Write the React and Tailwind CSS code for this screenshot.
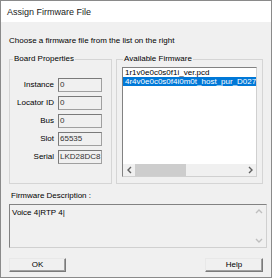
import React from "react";

const font = "font-['Liberation_Sans',Arial,sans-serif]";

const props = [
  { label: "Instance", value: "0" },
  { label: "Locator ID", value: "0" },
  { label: "Bus", value: "0" },
  { label: "Slot", value: "65535" },
  { label: "Serial", value: "LKD28DC8" },
];

const firmware = [
  "1r1v0e0c0s0f1i_ver.pcd",
  "4r4v0e0c0s0f4i0m0t_host_pur_D027",
];

const Arrow = ({ dir }) => {
  const paths = {
    left: "M4 1 L1 4 L4 7",
    right: "M1 1 L4 4 L1 7",
    up: "M1 4 L4 1 L7 4",
    down: "M1 1 L4 4 L7 1",
  };
  const wide = dir === "up" || dir === "down";
  return (
    <svg width={wide ? 8 : 5} height={wide ? 5 : 8} viewBox={wide ? "0 0 8 5" : "0 0 5 8"}>
      <path d={paths[dir]} fill="none" stroke={wide ? "#bfbfbf" : "#606060"} strokeWidth="1.4" />
    </svg>
  );
};

export default function App() {
  return (
    <div className={`w-[273px] h-[279px] bg-white ${font} text-[8px] leading-[10px] text-black`}>
      <div className="w-[272px] h-[278px] border border-[#8a8a8a] flex flex-col bg-[#f0f0f0]">
        {/* title bar */}
        <div className="h-[21px] bg-white flex items-center pl-[6px] text-[9px] text-[#1a1a1a]">
          Assign Firmware File
        </div>

        <div className="flex flex-col px-[8px]">
          <div className="mt-[14px] h-[10px] whitespace-nowrap">Choose a firmware file from the list on the right</div>

          <div className="flex gap-[4px] mt-[8px] h-[130px]">
            <fieldset className="w-[105px] h-[130px] border border-[#d5d5d5] px-[2px]">
              <legend className="ml-[1px] px-[1px] h-[10px]">Board Properties</legend>
              <div className="flex flex-col gap-[4px] mt-[14px]">
                {props.map((p) => (
                  <div key={p.label} className="flex items-center h-[14px]">
                    <div className="w-[42px] text-right whitespace-nowrap">{p.label}</div>
                    <div className="ml-[4px] w-[44px] h-[14px] border border-[#a0a0a0] border-t-[#7a7a7a] border-l-[#7a7a7a] bg-[#f0f0f0] pl-[1px] leading-[12px] overflow-hidden whitespace-nowrap text-[#333]">
                      {p.value}
                    </div>
                  </div>
                ))}
              </div>
            </fieldset>

            <fieldset className="w-[147px] h-[130px] border border-[#d5d5d5] px-[5px]">
              <legend className="ml-[1px] px-[1px] h-[10px]">Available Firmware</legend>
              <div className="mt-[3px] w-[135px] h-[110px] border border-[#828282] border-b-[#d0d0d0] border-r-[#d0d0d0] bg-white flex flex-col">
                <div className="flex-1 flex flex-col overflow-hidden">
                  {firmware.map((f, i) => (
                    <div
                      key={f}
                      className={`h-[9px] leading-[9px] pl-[2px] whitespace-nowrap overflow-hidden ${
                        i === 1 ? "bg-[#0078d7] text-white" : ""
                      }`}
                    >
                      {f}
                    </div>
                  ))}
                </div>
                <div className="h-[12px] flex items-center bg-[#f0f0f0]">
                  <div className="w-[12px] flex justify-center"><Arrow dir="left" /></div>
                  <div className="flex-1 h-[12px] flex">
                    <div className="w-[51px] h-[12px] bg-[#cdcdcd]" />
                  </div>
                  <div className="w-[12px] flex justify-center"><Arrow dir="right" /></div>
                </div>
              </div>
            </fieldset>
          </div>

          <div className="mt-[7px] h-[10px] pl-[2px]">Firmware Description :</div>

          <div className="mt-[3px] w-[258px] h-[44px] border border-[#828282] border-b-[#d0d0d0] border-r-[#d0d0d0] bg-[#f0f0f0] flex">
            <div className="flex-1 pl-[2px] pt-[3px]">Voice 4|RTP 4|</div>
            <div className="w-[14px] flex flex-col justify-between items-center py-[4px]">
              <Arrow dir="up" />
              <Arrow dir="down" />
            </div>
          </div>

          <div className="mt-[10px] flex justify-between">
            <button className="w-[57px] h-[14px] border border-[#7a7a7a] border-t-[#e8e8e8] border-l-[#e8e8e8] bg-[#f0f0f0] shadow-[inset_-1px_-1px_0_#a0a0a0] leading-[12px] text-center">
              OK
            </button>
            <button className="w-[58px] h-[14px] border border-[#7a7a7a] border-t-[#e8e8e8] border-l-[#e8e8e8] bg-[#f0f0f0] shadow-[inset_-1px_-1px_0_#a0a0a0] leading-[12px] text-center">
              Help
            </button>
          </div>
        </div>
      </div>
    </div>
  );
}
